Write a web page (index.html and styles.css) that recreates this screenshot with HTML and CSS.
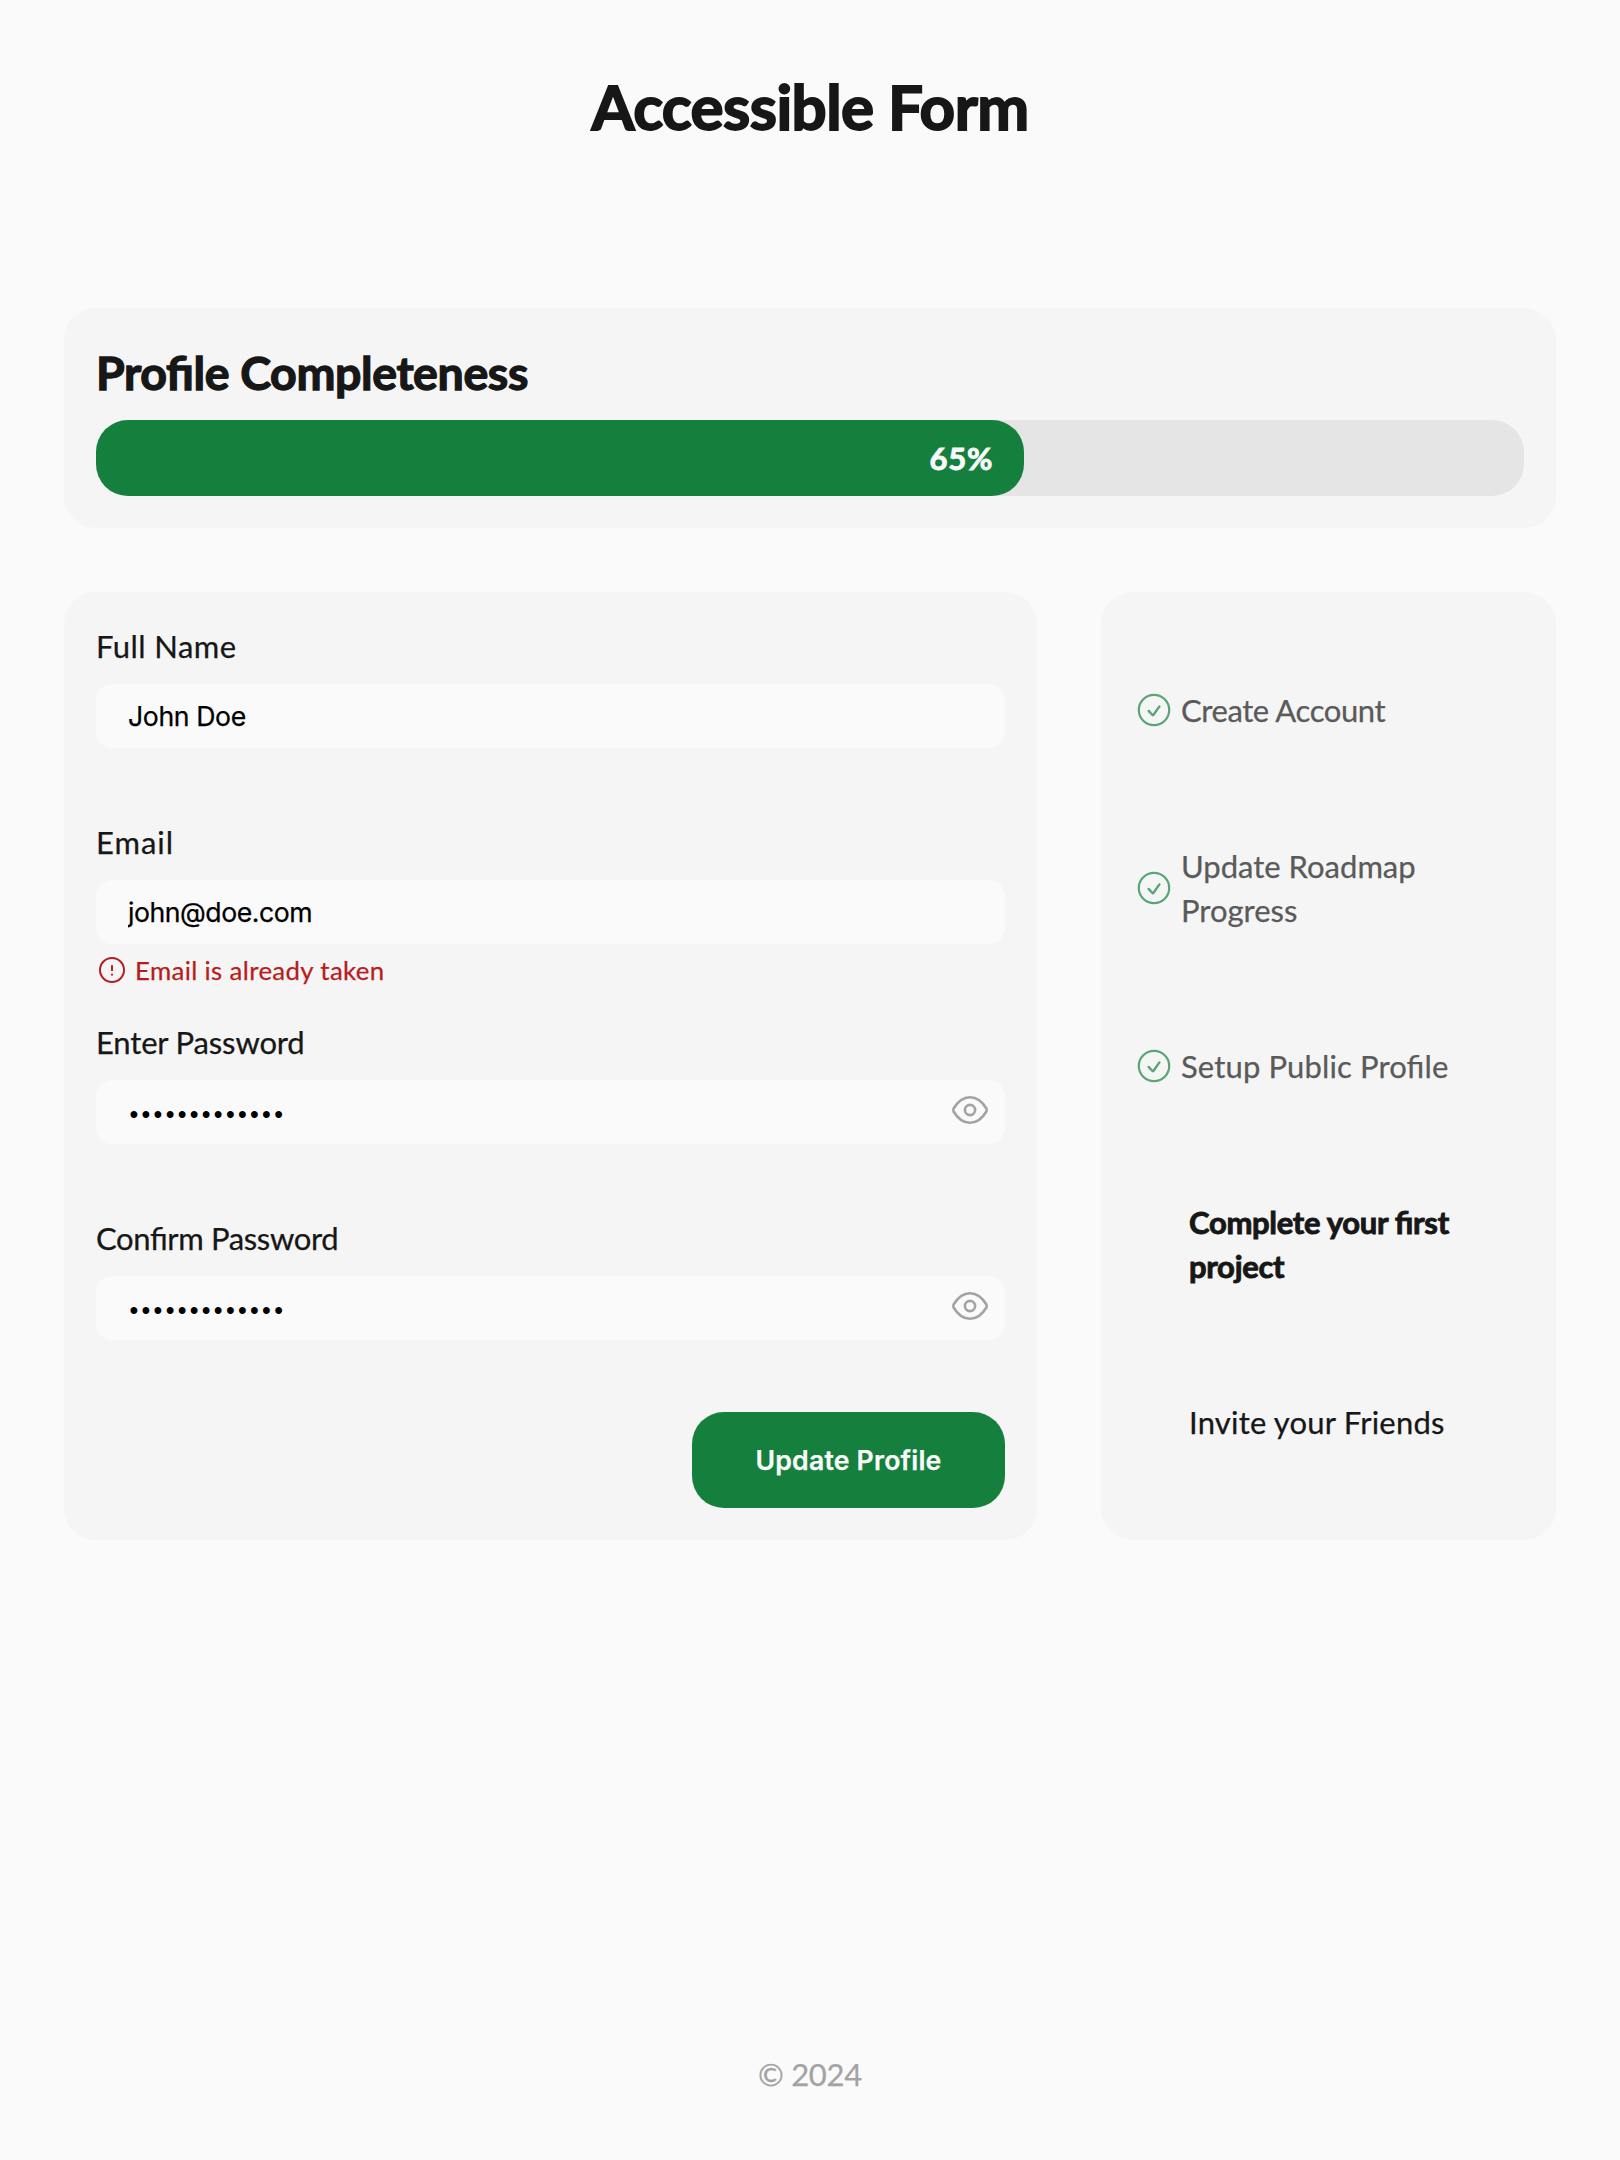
FILE: index.html
```html
<!DOCTYPE html>
<html lang="en">
<head>
<meta charset="utf-8">
<title>Accessible Form</title>
<link rel="stylesheet" href="styles.css">
</head>
<body>
<svg class="sprite" aria-hidden="true">
  <symbol id="check" viewBox="0 0 34 34">
    <circle cx="17" cy="17" r="15.2"/>
    <path d="M11.6 17.9l3.8 4.1q.5.5 1 0l6-8.6" stroke-width="2.4"/>
  </symbol>
  <symbol id="eye" viewBox="0 0 38 30">
    <path d="M2.6 13.5C7 6 12.5 2.2 19 2.2S31 6 35.4 13.5q.8 1.5 0 3C31 24 25.500 27.800 19 27.800S7 24 2.600 16.500q-.8-1.500 0-3z"/>
    <circle cx="19" cy="15" r="5.100"/>
  </symbol>
</svg>
<header class="header"><h1 class="title">Accessible Form</h1></header>
<main class="main">
  <section class="card progress">
    <h2 class="heading">Profile Completeness</h2>
    <div class="bar"><div class="fill" style="width: 65%">65%</div></div>
  </section>
  <div class="columns">
    <form class="card form">
      <div class="field">
        <label class="label name" for="name">Full Name</label>
        <input class="input" id="name" type="text" value="John Doe">
      </div>
      <div class="field invalid">
        <label class="label mail" for="email">Email</label>
        <input class="input address" id="email" type="email" value="john@doe.com">
        <p class="error">
          <svg class="alert" viewBox="0 0 26 26"><circle cx="13" cy="13" r="12"/><path d="M13 8.200v5.800M13 16.800v1.600"/></svg>
          <span>Email is already taken</span>
        </p>
      </div>
      <div class="field">
        <label class="label enter" for="pass">Enter Password</label>
        <div class="secret"><input class="input password" id="pass" type="password" value="correct-horse"><svg class="eye"><use href="#eye"/></svg></div>
      </div>
      <div class="field">
        <label class="label confirm" for="again">Confirm Password</label>
        <div class="secret"><input class="input password" id="again" type="password" value="correct-horse"><svg class="eye"><use href="#eye"/></svg></div>
      </div>
      <button class="button" type="button">Update Profile</button>
    </form>
    <aside class="card side">
      <ul class="steps">
        <li class="step done"><svg class="check"><use href="#check"/></svg><span class="account">Create Account</span></li>
        <li class="step done"><svg class="check"><use href="#check"/></svg><span>Update Roadmap Progress</span></li>
        <li class="step done"><svg class="check"><use href="#check"/></svg><span class="public">Setup Public Profile</span></li>
        <li class="step current"><span>Complete your first project</span></li>
        <li class="step next"><span>Invite your Friends</span></li>
      </ul>
    </aside>
  </div>
</main>
<footer class="footer">© 2024</footer>
</body>
</html>
```

FILE: styles.css
```css
* { box-sizing: border-box; margin: 0; padding: 0; }

body {
  display: flex;
  flex-direction: column;
  height: 2160px;
  padding: 64px;
  background: #fafafa;
  color: #171717;
  font: 400 31px/44px Lato, "PT Sans", sans-serif;
  font-feature-settings: "liga" 1;
  -webkit-text-stroke: .25px currentColor;
}

.sprite { position: absolute; width: 0; height: 0; }

svg { flex: none; fill: none; stroke: currentColor; stroke-width: 2; stroke-linecap: round; }

.header { height: 244px; text-align: center; }
.title { font-size: 62px; line-height: 84px; letter-spacing: -.6px; -webkit-text-stroke-width: 1.8px; }

.main { display: flex; flex-direction: column; gap: 64px; flex: 1; }
.card { background: #f5f5f5; border-radius: 32px; padding: 32px; }

.heading {
  margin-bottom: 16px;
  font-size: 46.5px;
  line-height: 64px;
  letter-spacing: -.38px;
  -webkit-text-stroke-width: 1.3px;
}
.bar { height: 76px; border-radius: 32px; background: #e5e5e5; }
.fill {
  height: 100%;
  padding-right: 31px;
  border-radius: 32px;
  background: #15803d;
  color: #fafafa;
  font-weight: 700;
  line-height: 76px;
  text-align: right;
  letter-spacing: .8px;
  -webkit-text-stroke-width: .9px;
}

.columns { display: grid; grid-template-columns: 973px 455px; gap: 64px; }

.form { display: flex; flex-direction: column; }
.field { display: flex; flex-direction: column; margin-bottom: 72px; }
.label { margin-bottom: 16px; }
.name { letter-spacing: .43px; }
.mail { letter-spacing: 1px; }
.enter { letter-spacing: -.15px; }
.confirm { letter-spacing: -.36px; }

.input {
  width: 100%;
  height: 64px;
  padding: 0 32px;
  border: 0;
  border-radius: 16px;
  background: #fafafa;
  color: #000;
  font: 400 26.67px Inter, sans-serif;
  letter-spacing: -.4px;
}
.address { letter-spacing: -.48px; }
.password { padding: 5px 80px 0 33.5px; font: 400 25px "Liberation Sans", sans-serif; letter-spacing: 3.3px; -webkit-text-stroke-width: 0; }

.secret { position: relative; display: flex; }
.eye { position: absolute; right: 16px; top: 15px; width: 38px; height: 30px; color: #a3a3a3; stroke-width: 2.6; }

.invalid { margin-bottom: 24px; }
.error {
  display: flex;
  align-items: center;
  gap: 10px;
  height: 52px;
  padding-left: 3px;
  color: #b91c1c;
  font-size: 25.8px;
  letter-spacing: .35px;
}
.alert { width: 26px; height: 26px; stroke-linecap: butt; }

.button {
  align-self: flex-end;
  width: 313px;
  height: 96px;
  border: 0;
  border-radius: 32px;
  background: #15803d;
  color: #fafafa;
  font: 600 26.67px Inter, sans-serif;
  letter-spacing: .18px;
}

.side { padding: 29px 40px 0 36px; }
.steps { display: grid; grid-template-rows: repeat(5, 178px); list-style: none; }
.step { display: flex; align-items: center; padding-left: 52px; }
.done { gap: 10px; padding-left: 0; color: #5a5a5a; }
.account { letter-spacing: -.4px; }
.public { letter-spacing: .13px; }
.current { font-weight: 700; letter-spacing: -.3px; -webkit-text-stroke-width: .9px; }
.next { letter-spacing: .2px; }
.check { width: 34px; height: 34px; color: #58a575; stroke-width: 2.2; }

.footer { color: #a3a3a3; text-align: center; letter-spacing: -.3px; height: 44px; }
```
